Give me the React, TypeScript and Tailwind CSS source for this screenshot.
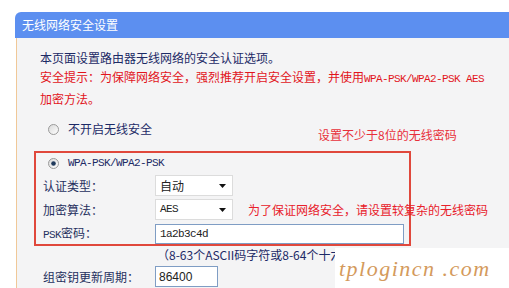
const cjk = "font-['Noto_Sans_CJK_SC','Noto_Sans',sans-serif]";
const mono = "font-['Liberation_Mono','Noto_Sans_CJK_SC',monospace] text-[11px] tracking-[-0.6px]";

const Radio = ({ checked }: { checked?: boolean }) => (
  <svg width="11" height="11" viewBox="0 0 11 11" className="shrink-0">
    <defs>
      <linearGradient id={checked ? "rg1" : "rg0"} x1="0" y1="0" x2="1" y2="1">
        <stop offset="0" stopColor="#d8d8d8" />
        <stop offset="1" stopColor="#ffffff" />
      </linearGradient>
    </defs>
    <circle cx="5.5" cy="5.5" r="5" fill={`url(#${checked ? "rg1" : "rg0"})`} stroke="#9a9a9a" />
    {checked && <circle cx="5.5" cy="5.5" r="2.3" fill="#203a5c" />}
  </svg>
);

const Select = ({ value, ascii }: { value: string; ascii?: boolean }) => (
  <div className="shrink-0 w-[78px] h-[21px] bg-white border border-[#dcdcdc] flex items-center justify-between pl-[4px] pr-[6px]">
    <span className={ascii ? mono + " text-[#222]" : "text-[12px] text-[#222]"}>{value}</span>
    <svg width="7" height="4" viewBox="0 0 7 4">
      <path d="M0 0h7L3.5 4z" fill="#111" />
    </svg>
  </div>
);

export default function App() {
  return (
    <div className={`relative w-[509px] h-[288px] overflow-hidden bg-white pt-[12px] ${cjk}`}>
      <div className="ml-[15px]">
        <div className="h-[26px] bg-[#5c8ff0] rounded-tl-[6px] flex items-center pl-[7px] text-[12px] text-white">
          无线网络安全设置
        </div>
        <div className="ml-[1px] h-[260px] bg-[#f4f4f5] border-l border-[#f0c898] text-[12px]">
          <div className="pt-[10px] ml-[23px] leading-[19px]">
            <div className="text-[#1c2a66]">本页面设置路由器无线网络的安全认证选项。</div>
            <div className="text-[#e2141c] whitespace-nowrap">
              安全提示：为保障网络安全，强烈推荐开启安全设置，并使用
              <span className={mono}>WPA-PSK/WPA2-PSK AES</span>
            </div>
            <div className="text-[#e2141c]">加密方法。</div>
          </div>

          <div className="mt-[12px] ml-[31px] h-[18px] flex items-center gap-[9px] text-[#1c2a66]">
            <Radio />
            <span>不开启无线安全</span>
          </div>

          <div className="mt-[13px] ml-[17px] w-[377px] border-2 border-[#e0483c] pl-[7px] text-[#26305e]">
            <div className="pt-[1px] h-[19px] flex items-center gap-[9px] ml-[5px]">
              <Radio checked />
              <span className={mono + " text-[#1c2a66]"}>WPA-PSK/WPA2-PSK</span>
            </div>
            <div className="mt-[3px] flex items-center">
              <span className="shrink-0 w-[112px]">认证类型：</span>
              <Select value="自动" />
            </div>
            <div className="mt-[3px] flex items-center">
              <span className="shrink-0 w-[112px]">加密算法：</span>
              <Select value="AES" ascii />
              <span className="shrink-0 ml-[15px] whitespace-nowrap text-[#e8202a]">
                为了保证网络安全，请设置较复杂的无线密码
              </span>
            </div>
            <div className="mt-[4px] flex items-center">
              <span className="shrink-0 w-[112px]">
                <span className={mono}>PSK</span>密码：
              </span>
              <div className="shrink-0 w-[249px] h-[20px] bg-white border border-[#7f9dc4] flex items-center pl-[4px]">
                <span className={mono + " text-[#222]"}>1a2b3c4d</span>
              </div>
            </div>
          </div>

          <div className="mt-[1px] ml-[140px] leading-[16px] text-[#1c2a66] whitespace-nowrap">
            （8-63个ASCII码字符或8-64个十六进制字符）
          </div>

          <div className="mt-[3px] ml-[26px] flex items-center text-[#26305e]">
            <span className="shrink-0 w-[112px]">组密钥更新周期：</span>
            <div className="shrink-0 w-[63px] h-[21px] bg-white border border-[#7f9dc4] flex items-center pl-[3px]">
              <span className="text-[12px] font-['Liberation_Sans',sans-serif] text-[#222]">86400</span>
            </div>
          </div>
        </div>
      </div>

      <div className="absolute left-[318px] top-[126px] text-[12px] leading-[18px] text-[#e8303a]">
        设置不少于8位的无线密码
      </div>

      <div className="absolute left-[335px] top-[248px] w-[174px] h-[40px] bg-white flex items-center pl-[4px]">
        <span className="font-['Liberation_Serif',serif] italic text-[22px] tracking-[1.5px] text-[#d49a5c] whitespace-nowrap">
          tplogincn .com
        </span>
      </div>
    </div>
  );
}
